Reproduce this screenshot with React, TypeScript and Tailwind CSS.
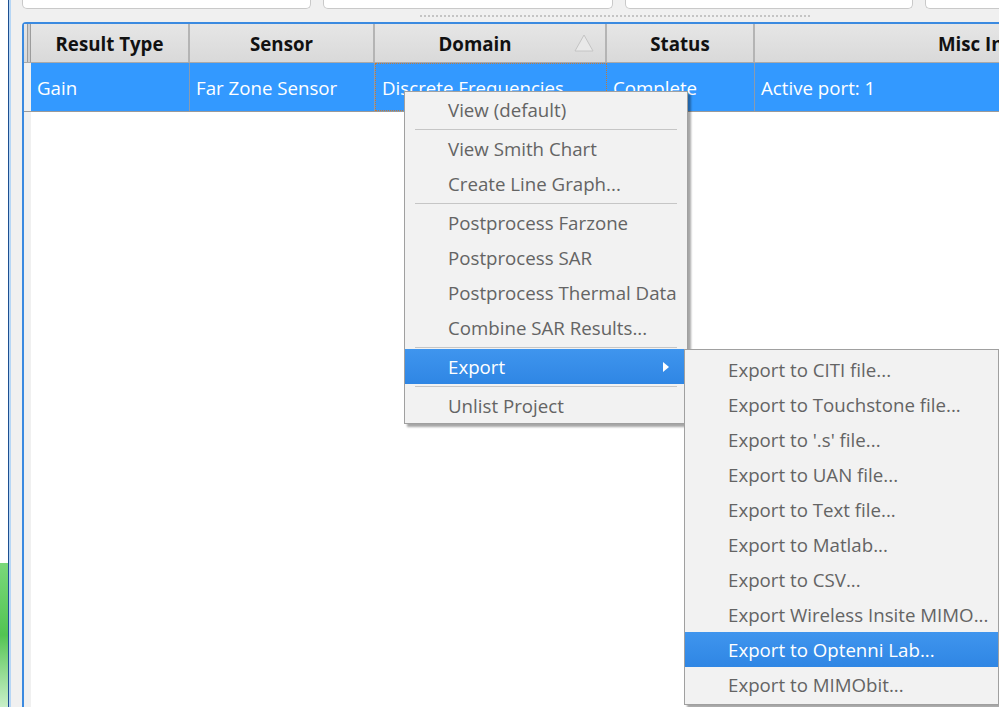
import { useState } from "react";

type Column = { key: string; label: string; width: string; sorted?: boolean };

const columns: Column[] = [
  { key: "type", label: "Result Type", width: "w-[159px]" },
  { key: "sensor", label: "Sensor", width: "w-[185px]" },
  { key: "domain", label: "Domain", width: "w-[232px]", sorted: true },
  { key: "status", label: "Status", width: "w-[148px]" },
  { key: "misc", label: "Misc Info", width: "w-[490px]" },
];

const row: Record<string, string> = {
  type: "Gain",
  sensor: "Far Zone Sensor",
  domain: "Discrete Frequencies",
  status: "Complete",
  misc: "Active port: 1",
};

// null marks a separator line
const menuItems: (string | null)[] = [
  "View (default)",
  null,
  "View Smith Chart",
  "Create Line Graph...",
  null,
  "Postprocess Farzone",
  "Postprocess SAR",
  "Postprocess Thermal Data",
  "Combine SAR Results...",
  null,
  "Export",
  null,
  "Unlist Project",
];

const exportItems = [
  "Export to CITI file...",
  "Export to Touchstone file...",
  "Export to '.s' file...",
  "Export to UAN file...",
  "Export to Text file...",
  "Export to Matlab...",
  "Export to CSV...",
  "Export Wireless Insite MIMO...",
  "Export to Optenni Lab...",
  "Export to MIMObit...",
];

function SortArrow() {
  return (
    <svg width="22" height="20" viewBox="0 0 22 20" className="absolute right-[10px] top-[9px]">
      <path d="M11 2 L20 18 L2 18 Z" fill="#e9e9e9" stroke="#c4c4c4" strokeWidth="1" />
    </svg>
  );
}

function MenuRow({ label, active, hasSub }: { label: string; active?: boolean; hasSub?: boolean }) {
  return (
    <div
      className={`relative flex h-[35px] items-center whitespace-nowrap pl-[43px] pt-[2px] ${
        active ? "bg-gradient-to-b from-[#3f95ee] to-[#2f86e4] text-white" : "text-[#646464]"
      }`}
    >
      {label}
      {hasSub && (
        <svg width="8" height="12" viewBox="0 0 8 12" className="absolute right-[17px] top-[12px]">
          <path d="M1 1 L7 6 L1 11 Z" fill="white" />
        </svg>
      )}
    </div>
  );
}

export default function App() {
  const [hovered] = useState("Export");

  return (
    <div className="relative flex h-[707px] w-[999px] overflow-hidden bg-white font-['Open_Sans',sans-serif] text-[18.7px] leading-none">
      {/* desktop peeking out on the left */}
      <div className="flex w-[8px] shrink-0 flex-col">
        <div className="flex-1 bg-white" />
        <div className="h-[144px] bg-gradient-to-b from-[#7ad87a] via-[#52c452] to-[#c8efc8]" />
      </div>
      <div className="w-px shrink-0 bg-[#1d4f91]" />
      <div className="w-[2px] shrink-0 bg-[#b6d6f5]" />

      <div className="flex min-w-0 flex-1 flex-col overflow-hidden bg-[#f0f0f0]">
        {/* tool panes above the splitter */}
        <div className="flex h-[22px] shrink-0 flex-col">
          <div className="flex h-[9px] gap-[12px] pl-[11px]">
            <div className="w-[289px] shrink-0 rounded-b-[5px] border-x border-b border-[#c9c9c9] bg-white" />
            <div className="w-[290px] shrink-0 rounded-b-[5px] border-x border-b border-[#c9c9c9] bg-white" />
            <div className="w-[288px] shrink-0 rounded-b-[5px] border-x border-b border-[#c9c9c9] bg-white" />
            <div className="flex-1 rounded-bl-[5px] border-b border-l border-[#c9c9c9] bg-white" />
          </div>
          <div className="ml-[409px] mt-[6px] w-[390px] border-t-2 border-dotted border-[#c4c4c4]" />
        </div>

        {/* results table */}
        <div className="ml-[11px] flex flex-1 flex-col rounded-tl-[4px] border-l-2 border-t-2 border-[#3b8ae0] bg-white">
          <div className="flex h-[39px] shrink-0 border-b border-[#a9a9a9] bg-gradient-to-b from-[#e6e6e6] to-[#d9d9d9]">
            <div className="ml-[3px] w-[4px] shrink-0 border-x border-[#9c9c9c] bg-[#cfcfcf]" />
            {columns.map((c) => (
              <div
                key={c.key}
                className={`relative flex shrink-0 items-center whitespace-nowrap border-r-2 border-[#b4b4b4] pt-[3px] font-bold text-[#111] ${c.width} ${
                  c.key === "misc" ? "justify-start pl-[183px]" : c.sorted ? "justify-center pr-[30px]" : "justify-center"
                }`}
              >
                {c.label}
                {c.sorted && <SortArrow />}
              </div>
            ))}
          </div>

          <div className="flex h-[49px] shrink-0 border-b border-[#9a9a9a]">
            <div className="w-[7px] shrink-0 bg-[#f0f0f0]" />
            {columns.map((c) => (
              <div
                key={c.key}
                className={`flex shrink-0 items-center whitespace-nowrap bg-[#3399ff] pl-[6px] pt-[2px] text-white ${c.width} ${
                  c.key === "domain" ? "border border-dotted border-[#c07a3a]" : "border-r border-[#8a9bb0]"
                }`}
              >
                {row[c.key]}
              </div>
            ))}
          </div>

          <div className="flex flex-1">
            <div className="w-[7px] shrink-0 bg-[#f0f0f0]" />
            <div className="flex-1 bg-white" />
          </div>
        </div>
      </div>

      {/* context menu */}
      <div className="absolute left-[404px] top-[91px] w-[284px] border border-[#a0a0a0] bg-[#f2f2f2] shadow-[3px_3px_2px_rgba(0,0,0,0.35)]">
        {menuItems.map((m, i) =>
          m === null ? (
            <div key={i} className="flex h-[4px] items-center px-[10px]">
              <div className="h-px flex-1 bg-[#c6c6c6]" />
            </div>
          ) : (
            <MenuRow key={i} label={m} active={m === hovered} hasSub={m === "Export"} />
          )
        )}
      </div>

      {/* Export submenu */}
      <div className="absolute left-[684px] top-[349px] w-[315px] border border-[#a0a0a0] bg-[#f2f2f2] py-[2px] shadow-[3px_3px_2px_rgba(0,0,0,0.35)]">
        {exportItems.map((m) => (
          <MenuRow key={m} label={m} active={m === "Export to Optenni Lab..."} />
        ))}
      </div>
    </div>
  );
}
